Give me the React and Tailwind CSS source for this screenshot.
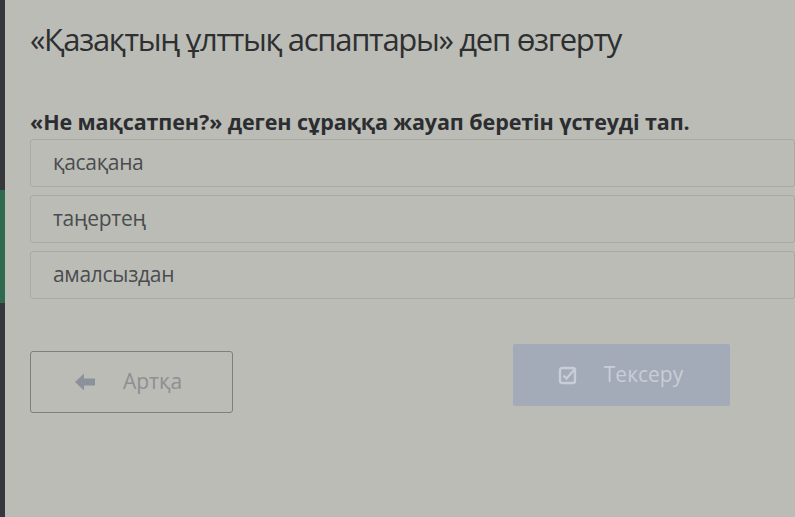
import React from "react";

const options = ["қасақана", "таңертең", "амалсыздан"];

const ArrowLeft = () => (
  <svg width="21" height="18" viewBox="0 0 21 18" className="fill-[#8b929b]">
    <path d="M0 9L9 0.5V5.5H20V12.5H9V17.5Z" />
  </svg>
);

const CheckSquare = () => (
  <svg width="20" height="20" viewBox="0 0 20 20" fill="none" stroke="#c9ced6" strokeWidth="2.4">
    <rect x="2" y="3" width="15" height="15" rx="2" />
    <path d="M5.5 10.5l3 3 8-9" />
  </svg>
);

export default function App() {
  return (
    <div className="relative min-h-[517px] w-[795px] overflow-hidden bg-[#bbbcb5] font-['Open_Sans',sans-serif]">
      {/* left edge of the screen frame */}
      <div className="absolute left-0 top-0 h-full w-[5px] bg-[#34373b]">
        <div className="mt-[190px] h-[113px] bg-[#2f6a4e]" />
      </div>

      <div className="pl-[30px] pr-0 pt-[17px]">
        <h1 className="text-[31px] leading-[44px] font-normal tracking-[-1.3px] text-[#2d2f31]">
          «Қазақтың ұлттық аспаптары» деп өзгерту
        </h1>

        <p className="mt-[47px] text-[21.5px] leading-[28px] font-bold tracking-[-0.1px] text-[#2b2d30]">
          «Не мақсатпен?» деген сұраққа жауап беретін үстеуді тап.
        </p>

        <div className="mt-[3px] flex flex-col gap-[8px]">
          {options.map((o) => (
            <div
              key={o}
              className="flex h-[48px] items-center rounded-[3px] border border-[#a9aaa4] pl-[22px] text-[21px] tracking-[-0.3px] text-[#4a4c4f]"
            >
              {o}
            </div>
          ))}
        </div>

        <div className="mt-[45px] flex items-start justify-between pr-[65px]">
          <button className="mt-[7px] flex h-[62px] w-[203px] items-center justify-center gap-[27px] rounded-[3px] border border-[#7f807c] pr-[6px] text-[21px] text-[#8d8f92]">
            <ArrowLeft />
            <span>Артқа</span>
          </button>
          <button className="flex h-[62px] w-[217px] items-center justify-center gap-[26px] rounded-[2px] bg-[#a3abb8] pr-[2px] text-[21px] text-[#c9ced6]">
            <CheckSquare />
            <span>Тексеру</span>
          </button>
        </div>
      </div>
    </div>
  );
}
